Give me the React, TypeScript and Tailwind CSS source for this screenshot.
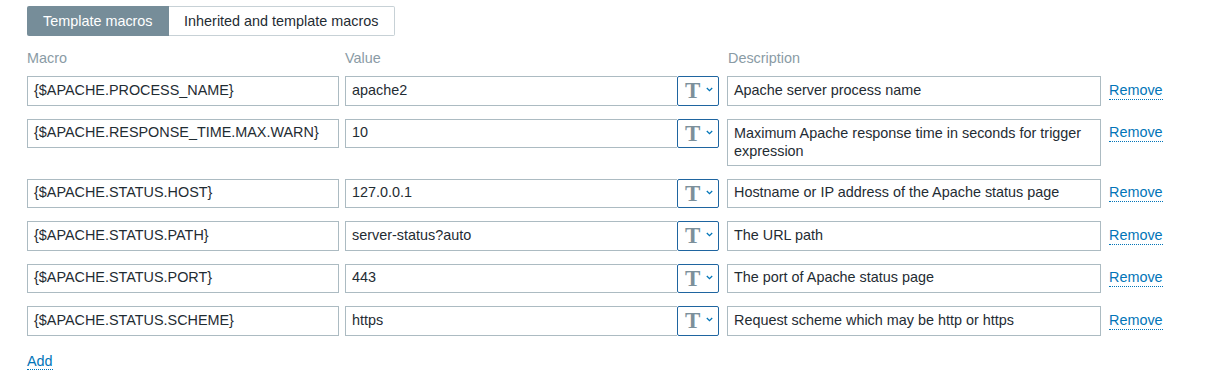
import React from 'react';

type Macro = { name: string; value: string; description: string };

const macros: Macro[] = [
  { name: '{$APACHE.PROCESS_NAME}', value: 'apache2', description: 'Apache server process name' },
  { name: '{$APACHE.RESPONSE_TIME.MAX.WARN}', value: '10', description: 'Maximum Apache response time in seconds for trigger expression' },
  { name: '{$APACHE.STATUS.HOST}', value: '127.0.0.1', description: 'Hostname or IP address of the Apache status page' },
  { name: '{$APACHE.STATUS.PATH}', value: 'server-status?auto', description: 'The URL path' },
  { name: '{$APACHE.STATUS.PORT}', value: '443', description: 'The port of Apache status page' },
  { name: '{$APACHE.STATUS.SCHEME}', value: 'https', description: 'Request scheme which may be http or https' },
];

function TypeButton() {
  return (
    <button className="w-[42px] h-[29.5px] flex-shrink-0 flex items-center pl-[7px] gap-[6px] border border-[#1f65a0] rounded-[2px] bg-white">
      <span className="font-['Liberation_Serif',serif] font-bold text-[23px] leading-none text-[#7c909b]">T</span>
      <svg className="w-[7px] h-[5px] -mt-[2px]" viewBox="0 0 7 5" fill="none" stroke="#0275b8" strokeWidth={1.3}>
        <path d="M0.8 1l2.7 2.6L6.2 1" />
      </svg>
    </button>
  );
}

export default function App() {
  return (
    <div className="bg-white min-h-[386px] pl-[27px] pt-[6px] font-['Liberation_Sans',Arial,sans-serif] text-[14.4px] text-[#1f2c33]">
      <div className="flex h-[30px]">
        <button className="px-[16px] bg-[#768d99] text-white rounded-l-[2px] leading-[30px]">Template macros</button>
        <button className="px-[15.5px] bg-white border border-[#c7d1d6] border-l-0 rounded-r-[2px] leading-[28px]">Inherited and template macros</button>
      </div>

      <div className="flex mt-[14px] leading-[17px] text-[#8a9ba5]">
        <div className="w-[312px]">Macro</div>
        <div className="w-[374px] ml-[6px]">Value</div>
        <div className="w-[374px] ml-[8px] pl-[1px]">Description</div>
      </div>

      <div className="flex flex-col gap-[13px] mt-[9px]">
        {macros.map((m) => (
          <div key={m.name} className="flex items-start">
            <div className="w-[312px] h-[29.5px] flex items-center px-[6px] border border-[#acbbc2] whitespace-nowrap overflow-hidden">{m.name}</div>
            <div className="w-[374px] ml-[6px] flex">
              <div className="flex-1 h-[29.5px] flex items-center px-[6px] border border-[#acbbc2] border-r-0">{m.value}</div>
              <TypeButton />
            </div>
            {m.description.length > 50 ? (
              <div className="w-[374px] ml-[8px] px-[6px] py-[4.5px] leading-[18px] border border-[#acbbc2]">{m.description}</div>
            ) : (
              <div className="w-[374px] ml-[8px] h-[29.5px] flex items-center px-[6px] border border-[#acbbc2] whitespace-nowrap">{m.description}</div>
            )}
            <div className="ml-[8px] h-[29.5px] flex items-center">
              <a href="#" className="leading-[17px] text-[#0275b8] border-b border-dotted border-[#0275b8]">Remove</a>
            </div>
          </div>
        ))}
      </div>

      <div className="mt-[16px] leading-[19px]">
        <a href="#" className="text-[#0275b8] border-b border-dotted border-[#0275b8]">Add</a>
      </div>
    </div>
  );
}
